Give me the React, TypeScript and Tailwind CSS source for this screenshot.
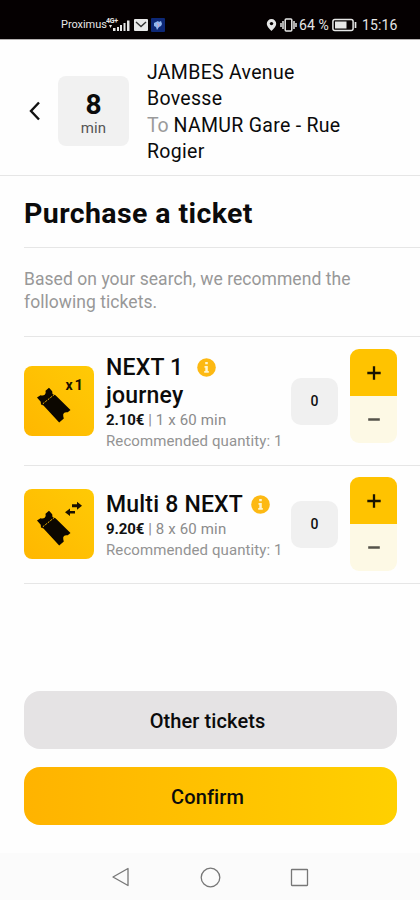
import { useState } from 'react';

type Ticket = {
    id: string;
    name: string[];
    price: string;
    details: string;
    badge: 'single' | 'multi';
    rowClass: string;
    stepperClass: string;
};

const tickets: Ticket[] = [
    {
        id: 'next-1',
        name: ['NEXT 1', 'journey'],
        price: '2.10€',
        details: '1 x 60 min',
        badge: 'single',
        rowClass: 'h-[129px]',
        stepperClass: 'mb-[10px]',
    },
    {
        id: 'multi-8',
        name: ['Multi 8 NEXT'],
        price: '9.20€',
        details: '8 x 60 min',
        badge: 'multi',
        rowClass: 'h-[118px] pb-[1px]',
        stepperClass: 'mb-0',
    },
];

function StatusBar() {
    return (
        <div className="flex h-10 items-end justify-between border-b border-[#b5b1b1] bg-[#050001] pb-[6px] pl-[61px] pr-[22px] text-[#e6e6e6]">
            <div className="flex h-4 items-center">
                <span className="w-[45px] whitespace-nowrap text-[11px] tracking-[-0.05px]">Proximus</span>
                <svg className="h-4 w-[25px]" viewBox="0 0 25 16" fill="currentColor">
                    <text x="0" y="6" fontSize="7" fontWeight="700" textLength="12">4G+</text>
                    <path d="M7 11h2.500v3H7zM11 10h2v4h-2zM14 8h2v6h-2zM17.500 6h2v8h-2zM21 3.500h2.500V14H21z" />
                    <path d="M3 8h3l-1.500 3z" />
                </svg>
                <svg className="ml-[3px] h-3 w-[14px]" viewBox="0 0 14 12">
                    <rect width="14" height="12" rx="1" fill="#e8e8e8" />
                    <path d="M2 3l5 4.500L12 3" fill="none" stroke="#333" strokeWidth="1.400" />
                </svg>
                <svg className="ml-[3px] h-[14px] w-[14px]" viewBox="0 0 14 14">
                    <rect width="14" height="14" rx="1" fill="#0d2877" />
                    <path d="M3 5l2-1 2-1 1 1 2-1 1 3-1 2-2 1-2 3-1-3-2-1z" fill="#8fb6ef" />
                    <path d="M6 5l2 2-1 2" fill="none" stroke="#d9a0bd" strokeWidth="1" />
                </svg>
            </div>
            <div className="flex h-4 items-center">
                <svg className="h-[14px] w-[11px]" viewBox="0 0 11 14">
                    <path d="M5.500 1A4.700 4.700 0 0 0 .8 5.700C.8 8.700 5.500 13 5.500 13s4.700-4.300 4.700-7.300A4.700 4.700 0 0 0 5.500 1z" fill="currentColor" />
                    <circle cx="5.500" cy="5.600" r="1.700" fill="#050001" />
                </svg>
                <svg className="ml-[3px] h-[14px] w-[17px]" viewBox="0 0 17 14" fill="none" stroke="currentColor" strokeWidth="1.500">
                    <rect x="5.200" y="1" width="6.600" height="12" rx="1" />
                    <path d="M3 3v8M14 3v8M1 5v4M16 5v4" />
                </svg>
                <span className="ml-[2px] w-[33px] whitespace-nowrap text-[14px] tracking-[0.1px]">64 %</span>
                <svg className="h-[14px] w-[25px]" viewBox="0 0 25 14">
                    <rect x="0.900" y="1.400" width="20.200" height="11.200" rx="2" fill="none" stroke="currentColor" strokeWidth="1.500" />
                    <rect x="3" y="3.500" width="11.500" height="7" fill="currentColor" />
                    <path d="M23.500 4v6" stroke="currentColor" strokeWidth="1.700" />
                </svg>
                <span className="ml-[5px] w-[36px] whitespace-nowrap text-[14px] tracking-[0.1px]">15:16</span>
            </div>
        </div>
    );
}

function TicketIcon({ badge }: { badge: 'single' | 'multi' }) {
    return (
        <svg className="h-[70px] w-[70px] shrink-0" viewBox="0 0 70 70">
            <defs>
                <linearGradient id={`tile-${badge}`} x1="0" y1="1" x2="1" y2="0">
                    <stop offset="0" stopColor="#ffb700" />
                    <stop offset="1" stopColor="#ffca05" />
                </linearGradient>
            </defs>
            <rect width="70" height="70" rx="8" fill={`url(#tile-${badge})`} />
            <path d="M13 31.500l3.500-2.300q2.600.8 4.200-.5t.8-4l3.500-3 3.200 3.500.3 2.800 3 1.200L46.500 44l-2.800 2.300q-2.400-.5-3.700.6t-.7 3.700l.5 1.800-4.600 4L19.500 39.500l-2.500-1-.3-2.800z" fill="#0c0700" />
            <path d="M18.800 37.800L31 28" stroke="#ffbf00" strokeWidth="1" strokeDasharray="2 1.200" />
            {badge === 'single' ? (
                <g fill="#1a1000" fontSize="14" fontWeight="700">
                    <text x="41.500" y="23.500">x</text>
                    <text x="50.500" y="23.500" fontSize="15">1</text>
                </g>
            ) : (
                <path d="M48 15.300h5V12.800l5 4-5 3.900v-2.500h-5zM51 22h-5v-2.500l-5 3.800 5 3.700v-2.500h5z" fill="#1a1000" />
            )}
        </svg>
    );
}

function InfoIcon() {
    return (
        <svg className="h-[19px] w-[19px] shrink-0" viewBox="0 0 19 19">
            <circle cx="9.500" cy="9.500" r="9.300" fill="#fdb913" />
            <path d="M8.200 4h2.600v2.200H8.200zM7.500 8h3.300v5h1v1.800H7.200V13h1.100V9.700h-.8z" fill="#fff5cf" />
        </svg>
    );
}

function TicketRow({ ticket }: { ticket: Ticket }) {

    const [quantity, setQuantity] = useState(0);

    return (
        <li className={`ml-6 flex items-center border-b border-[#e6e6e6] pr-[23px] ${ticket.rowClass}`}>
            <TicketIcon badge={ticket.badge} />
            <div className="ml-3 mt-[2px] w-[185px] whitespace-nowrap">
                {ticket.name.map((line, i) => (
                    <div key={line} className="flex h-7 items-center text-[23px] font-medium tracking-[0.2px] text-[#0b0b0b]">
                        <span className="pt-[2px]">{line}</span>
                        {i === 0 && <span className={ticket.badge === 'single' ? 'ml-[14px]' : 'ml-2'}><InfoIcon /></span>}
                    </div>
                ))}
                <p className="h-[21px] text-[15px] leading-[23px] tracking-[0.15px] text-[#8b8b8b]">
                    <b className="tracking-[-0.1px] text-[#111]">{ticket.price}</b> | {ticket.details}
                </p>
                <p className="h-[21px] text-[15px] leading-[23px] tracking-[0.1px] text-[#939393]">Recommended quantity: 1</p>
            </div>
            <div className="flex h-[47px] w-[47px] shrink-0 items-center justify-center rounded-[10px] bg-[#f0f0f0] text-[14px] font-medium text-[#111]">
                {quantity}
            </div>
            <div className={`ml-auto flex w-[47px] shrink-0 flex-col overflow-hidden rounded-[9px] ${ticket.stepperClass}`}>
                <button type="button" aria-label="Add" className="flex h-[47px] items-center justify-center bg-[#ffc300]" onClick={() => setQuantity(quantity + 1)}>
                    <svg className="h-[14px] w-[14px]" viewBox="0 0 14 14" stroke="#1a1400" strokeWidth="2.300">
                        <path d="M7 .3v13.400M.3 7h13.400" />
                    </svg>
                </button>
                <button type="button" aria-label="Remove" className="flex h-[47px] items-center justify-center bg-[#fdf9e5]" onClick={() => setQuantity(Math.max(0, quantity - 1))}>
                    <svg className="h-[14px] w-[14px]" viewBox="0 0 14 14" stroke="#55534a" strokeWidth="2.600">
                        <path d="M1.200 6.500h11.600" />
                    </svg>
                </button>
            </div>
        </li>
    );
}

export default function App() {
    return (
        <div className="flex h-[900px] w-[420px] flex-col overflow-hidden bg-[#fefefe] font-['Roboto',sans-serif] text-[#0b0b0b]">
            <StatusBar />
            <header className="flex h-[136px] items-center border-b border-[#e6e6e6] pl-[28px]">
                <button type="button" aria-label="Back" className="mt-[6px]">
                    <svg className="h-5 w-[12px]" viewBox="0 0 12 20" fill="none" stroke="#111" strokeWidth="2.400">
                        <path d="M11 1.500L3 10l8 8.500" />
                    </svg>
                </button>
                <div className="ml-[18px] mt-[6px] flex h-[70px] w-[71px] flex-col items-center justify-center rounded-[8px] bg-[#f1f1f1] pt-[7px]">
                    <span className="text-[28px] font-bold leading-[28px]">8</span>
                    <span className="text-[15px] leading-[19px] tracking-[0.1px] text-[#555]">min</span>
                </div>
                <h2 className="ml-[18px] mt-[10px] whitespace-nowrap text-[19.500px] leading-[26.200px] tracking-[0.3px]">
                    JAMBES Avenue<br />
                    Bovesse<br />
                    <span className="tracking-[-0.2px] text-[#9a9a9a]">To</span> NAMUR Gare - Rue<br />
                    Rogier
                </h2>
            </header>
            <main className="flex flex-1 flex-col">
                <h1 className="ml-6 h-[72px] border-b border-[#e6e6e6] pt-[20px] text-[28.500px] font-bold leading-9 tracking-[0.400px]">Purchase a ticket</h1>
                <p className="ml-6 h-[89px] border-b border-[#e6e6e6] pt-[20px] text-[17.500px] leading-[23px] tracking-[0.05px] text-[#989898]">
                    Based on your search, we recommend the<br />
                    following tickets.
                </p>
                <ul>
                    {tickets.map((ticket) => (
                        <TicketRow key={ticket.id} ticket={ticket} />
                    ))}
                </ul>
                <div className="mb-[28px] ml-6 mr-[23px] mt-auto flex flex-col gap-[18px] text-[20px] font-medium tracking-[0.1px]">
                    <button type="button" className="h-[58px] rounded-[16px] bg-[#e5e3e4] pr-[6px] pt-[2px]">Other tickets</button>
                    <button type="button" className="h-[58px] rounded-[16px] bg-linear-to-r from-[#ffb300] to-[#ffd000] pr-[6px] pt-[2px]">Confirm</button>
                </div>
            </main>
            <nav className="flex h-[47px] items-center bg-[#fbfbfb] pl-[111px]">
                <svg className="h-[22px] w-[200px]" viewBox="0 0 200 22" fill="none" stroke="#777" strokeWidth="1.300">
                    <path d="M17 2.500v17L2 11z" strokeLinejoin="round" />
                    <circle cx="99.500" cy="11.500" r="9.300" />
                    <rect x="180.500" y="3.500" width="16" height="16" rx="0.500" />
                </svg>
            </nav>
        </div>
    );
}
